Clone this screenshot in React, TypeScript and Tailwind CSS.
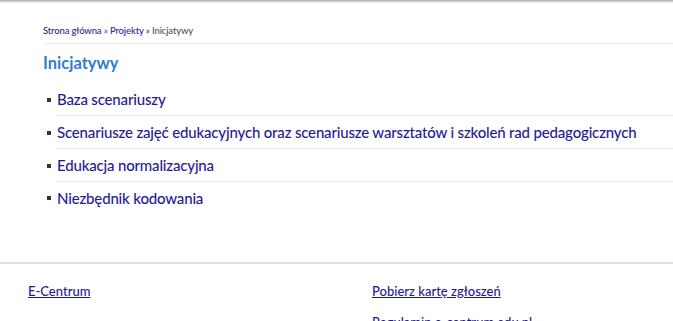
export default function App() {
  const items = [
    'Baza scenariuszy',
    'Scenariusze zajęć edukacyjnych oraz scenariusze warsztatów i szkoleń rad pedagogicznych',
    'Edukacja normalizacyjna',
    'Niezbędnik kodowania',
  ];

  return (
    <div className="min-h-screen bg-white" style={{ fontFamily: "Lato, 'Noto Sans', sans-serif" }}>
      {/* top shadow */}
      <div className="h-[3px] bg-gradient-to-b from-[#a9a9b1] to-white" />

      <main className="pl-[43px] pt-[21px]">
        {/* Breadcrumb */}
        <nav className="text-[9.5px] leading-[14px] tracking-[-0.15px] pb-[5px] border-b border-[#ececec] font-medium">
          <a href="#" className="text-[#2f2a9c]">Strona główna</a>
          <span className="text-[#666]"> » </span>
          <a href="#" className="text-[#2f2a9c]">Projekty</a>
          <span className="text-[#555]"> » Inicjatywy</span>
        </nav>

        <h1 className="mt-[8px] text-[16.5px] leading-[22px] font-bold text-[#2f7dcc]">
          Inicjatywy
        </h1>

        <ul className="mt-[9px]">
          {items.map((item, i) => (
            <li key={item} className="flex items-center">
              <span className="w-[4px] h-[4px] bg-[#333] mr-[6px] ml-[4px]" />
              <a
                href="#"
                className={`flex-1 text-[15px] leading-[20px] font-medium tracking-[-0.17px] text-[#1f1b96] py-[6px] whitespace-nowrap ${i < items.length - 1 ? 'border-b border-[#ececec]' : ''}`}
              >
                {item}
              </a>
            </li>
          ))}
        </ul>
      </main>

      <footer className="mt-[48px] border-t-2 border-[#dedede] px-[28px] pt-[18px] grid grid-cols-2 gap-x-[71px]">
        <div>
          <a href="#" className="block text-[13px] leading-[18px] font-medium text-[#1f1b96] underline">E-Centrum</a>
        </div>
        <div className="flex flex-col gap-[13px]">
          <a href="#" className="block text-[13px] leading-[18px] font-medium text-[#1f1b96] underline">Pobierz kartę zgłoszeń</a>
          <a href="#" className="block text-[13px] leading-[18px] font-medium text-[#1f1b96] underline">Regulamin e-centrum.edu.pl</a>
        </div>
      </footer>
    </div>
  );
}
